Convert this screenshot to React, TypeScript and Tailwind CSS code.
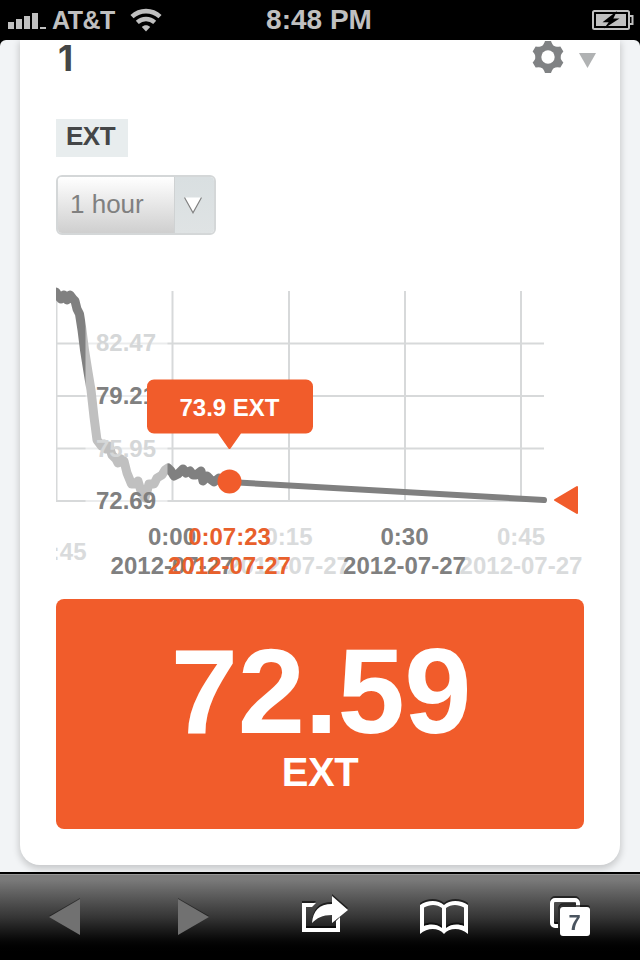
const H_LINES = [343.5, 396, 448.5, 501];
const V_LINES = [56.5, 172.5, 289, 405, 521];

const Y_LABELS = [
  { text: '82.47', y: 351, fill: '#d5d7d8' },
  { text: '79.21', y: 404, fill: '#808080' },
  { text: '75.95', y: 457, fill: '#d5d7d8' },
  { text: '72.69', y: 509, fill: '#808080' },
];

const DATE = '2012-07-27';
const X_LABELS = [
  { time: '0:15', x: 288.5, fill: '#d9dbdc' },
  { time: '0:45', x: 521, fill: '#d9dbdc' },
  { time: '0:00', x: 172, fill: '#808080' },
  { time: '0:30', x: 404.5, fill: '#808080' },
  { time: '0:07:23', x: 229.5, fill: '#e8602c' },
];

function StatusBar() {
  return (
    <header className="grid h-10 shrink-0 grid-cols-[1fr_auto_1fr] items-center bg-black text-[#c0c0c0]">
      <div className="flex items-center pl-2">
        <svg width="38" height="18" viewBox="0 0 38 18" fill="#c0c0c0">
          <rect x="0" y="11" width="6" height="7" />
          <rect x="8" y="8" width="6" height="10" />
          <rect x="16" y="5" width="6" height="13" />
          <rect x="24" y="2" width="6" height="16" />
          <rect x="32" y="16" width="6" height="2" />
        </svg>
        <span className="ml-[6px] text-[25px] leading-10 font-bold tracking-[-0.5px]">AT&amp;T</span>
        <svg className="ml-[15px]" width="32" height="24" viewBox="0 0 32 24" fill="none" stroke="#c0c0c0">
          <path d="M2 8.600C10 1.300 22 1.300 30 8.600" strokeWidth="4.6" />
          <path d="M7.300 14.300c5-4.500 12.400-4.500 17.400 0" strokeWidth="4.4" />
          <path d="M16 23.600l-4.200-4.600c2.300-2.300 6.100-2.300 8.400 0z" fill="#c0c0c0" stroke="none" />
        </svg>
      </div>
      <span className="mr-[2px] text-[28px] leading-[38px] font-bold">8:48 PM</span>
      <div className="flex justify-end pr-[6px]">
        <svg width="42" height="20" viewBox="0 0 42 20">
          <rect x="1" y="1" width="36" height="18" rx="1.5" fill="none" stroke="#c0c0c0" strokeWidth="2" />
          <path d="M38 6h2.500v8H38" fill="none" stroke="#c0c0c0" strokeWidth="2" />
          <rect x="4" y="4" width="30" height="12" fill="#c0c0c0" />
          <path d="M25 1L10.500 12.200h6.200L12 18.500 27.500 8.600h-6.200z" fill="#000" />
        </svg>
      </div>
    </header>
  );
}

function FeedHeader() {
  return (
    <div className="flex h-10 items-start justify-between">
      <h1 className="pl-[2px] font-['Inter','Liberation_Sans',sans-serif] text-[35px] leading-[37px] font-bold text-[#444647]">
        1
      </h1>
      <div className="flex items-start">
        <svg className="mt-px" width="32" height="32" viewBox="-16 -16 32 32" fill="#808284">
          <circle r="12.500" />
          {[0, 60, 120, 180, 240, 300].map((a) => (
            <path key={a} d="M-8.500-9Q-4.500-11-3-16H3Q4.500-11 8.500-9z" transform={`rotate(${a})`} />
          ))}
          <circle r="6.700" fill="#fff" />
        </svg>
        <svg className="mt-[13px] mr-[-12px] ml-[15px]" width="17" height="15" viewBox="0 0 17 15">
          <path d="M0 0h17L8.500 15z" fill="#b0b2b3" />
        </svg>
      </div>
    </div>
  );
}

function RangeSelect() {
  return (
    <button className="mt-[18px] flex h-[60px] w-40 overflow-hidden rounded-[6px] border-2 border-[#d4d7d8] text-left">
      <span className="h-full flex-1 bg-linear-to-b from-white to-[#cfcfcf] pl-3 text-[26px] leading-[55px] text-[#808080]">
        1 hour
      </span>
      <span className="flex h-full w-10 items-center border-l border-[#cfd2d3] bg-linear-to-b from-[#d9dfe1] to-[#dfe3e4] pl-[9px]">
        <svg className="shrink-0" width="18" height="17" viewBox="0 0 18 17">
          <path d="M.5.5h17L9 16z" fill="#fff" />
          <path d="M.5.5L9 15.800 17.500.5" fill="none" stroke="#808080" strokeWidth="1.200" />
        </svg>
      </span>
    </button>
  );
}

function Chart() {
  return (
    <svg
      className="mt-[45px] block overflow-hidden"
      width="528"
      height="310"
      viewBox="56 280 528 310"
      fontSize="24"
      fontWeight="bold"
    >
      <g stroke="#d7d9da" strokeWidth="2">
        {V_LINES.map((x) => (
          <line key={x} x1={x} x2={x} y1="291" y2="501" />
        ))}
        {H_LINES.map((y) => (
          <line key={y} x1="56" x2="544" y1={y} y2={y} />
        ))}
      </g>

      <g fill="none" stroke="#808080" strokeLinecap="round" strokeLinejoin="round">
        <path
          d="M56 292L59 297 61 299 64 295 67 300 70 295 73 299 75 301 77 309 79.500 314 82 330 84.500 350 88 372 91 390 94 417 97 440 101.500 446 104 444 106 449 109 446 112 455 116 459 118 463 121 459 124 461 127 473 131.500 484 135 484 138 481 141 491 145 498 149 484 154 484 157 478 162 475 165 470 168 468 171 471 174 476 178 474 180 472 183 469 186 473 190 471 193 475 196 475 201 471 203 481 207 476 210 479 214 482 219 478 224 481 230 482"
          strokeWidth="9"
        />
        <path d="M229 482L544 500" strokeWidth="6" />
      </g>

      {/* translucent band behind the value labels */}
      <rect x="85.500" y="285" width="82" height="222" fill="#fff" opacity=".5" />

      {Y_LABELS.map((l) => (
        <text key={l.text} x="96" y={l.y} fill={l.fill}>
          {l.text}
        </text>
      ))}

      {X_LABELS.map((l) => (
        <g key={l.time} fill={l.fill} textAnchor="middle">
          <text x={l.x} y="545">{l.time}</text>
          <text x={l.x} y="574">{DATE}</text>
        </g>
      ))}
      <text x="86.500" y="560" fill="#d9dbdc" textAnchor="end">23:45</text>

      <circle cx="229.500" cy="481.500" r="12" fill="#f15c2b" />
      <path
        d="M154 379.500H306a7 7 0 0 1 7 7V426.500a7 7 0 0 1-7 7H241L230.500 448.500q-1 1-2 0L218 433.500H154a7 7 0 0 1-7-7V386.500a7 7 0 0 1 7-7z"
        fill="#f15c2b"
      />
      <text x="229.500" y="416" fill="#fff" textAnchor="middle">73.9 EXT</text>
      <path d="M555 500L577 487v26z" fill="#f15c2b" stroke="#f15c2b" strokeWidth="2" strokeLinejoin="round" />
    </svg>
  );
}

function CurrentValue() {
  return (
    <div className="mt-[9px] flex h-[230px] flex-col items-center rounded-lg bg-[#f15c2b] pt-8 font-bold text-white">
      <span className="ml-[2px] text-[121px] leading-[120px] tracking-[-0.5px]">72.59</span>
      <span className="text-[40px] leading-[43px] tracking-[-0.5px]">EXT</span>
    </div>
  );
}

function Toolbar() {
  return (
    <nav className="h-[88px] shrink-0 border-t-2 border-black">
      <div className="flex h-full items-start border-t border-[#969696] bg-linear-to-b from-[#7b7b7b] from-5% via-[#353535] via-50% to-black to-95%">
        <svg className="mt-[24px] ml-[49px] drop-shadow-[0_-1px_0_rgba(0,0,0,0.4)]" width="31" height="36" viewBox="0 0 31 36">
          <path d="M0 18L31 0v36z" fill="#717171" />
        </svg>
        <svg className="mt-[24px] ml-[98px] drop-shadow-[0_-1px_0_rgba(0,0,0,0.4)]" width="31" height="36" viewBox="0 0 31 36">
          <path d="M31 18L0 0v36z" fill="#717171" />
        </svg>
        <svg className="mt-[21px] ml-[93px] drop-shadow-[0_-2px_0_rgba(0,0,0,0.6)]" width="47" height="38" viewBox="0 0 47 38">
          <path d="M14 7L10 11H4v21h30v-7l4-4v15H0V7z" fill="#fff" />
          <path d="M10 27C11 15 17 8 30 8V0l16 14-16 13v-8c-10 0-15 3-20 8z" fill="#fff" />
        </svg>
        <svg className="mt-[26px] ml-[71px] drop-shadow-[0_-2px_0_rgba(0,0,0,0.6)]" width="48" height="34" viewBox="0 0 48 34">
          <path
            fillRule="evenodd"
            fill="#fff"
            d="M0 4C7-1 18-1.500 24 4 30-1.500 41-1 48 4V33C40 26 29 27 24 33 19 27 8 26 0 33zM4 6.500V25C10 22.500 17 23 22 27V7C17 3 10 3 4 6.500zM44 6.500V25C38 22.500 31 23 26 27V7C31 3 38 3 44 6.500z"
          />
        </svg>
        <svg className="mt-[23px] ml-[82px] drop-shadow-[0_-2px_0_rgba(0,0,0,0.6)]" width="40" height="38" viewBox="0 0 40 38">
          <path d="M8 28H5a3 3 0 0 1-3-3V5a3 3 0 0 1 3-3h20a3 3 0 0 1 3 3v4" fill="none" stroke="#fff" strokeWidth="4" />
          <path d="M9 30V12a4 4 0 0 1 4-4h17" fill="none" stroke="#333" strokeWidth="1.500" />
          <rect x="10" y="9" width="30" height="29" rx="3" fill="#fff" />
          <text x="24.500" y="31.500" fontSize="22" fontWeight="bold" textAnchor="middle" fill="#4a545f">7</text>
        </svg>
      </div>
    </nav>
  );
}

export default function App() {
  return (
    <div className="flex h-[960px] w-[640px] flex-col overflow-hidden bg-black font-['Liberation_Sans',Arial,sans-serif]">
      <StatusBar />
      <main className="h-[832px] shrink-0 overflow-hidden rounded-t-[6px] bg-[#f2f4f6] px-5">
        <section className="h-[825px] rounded-b-[20px] bg-white px-9 shadow-[0_3px_7px_1px_rgba(0,0,0,0.18)]">
          <FeedHeader />
          <div className="mt-[39px] h-[38px] w-[72px] bg-[#e8edee] pl-[10px] text-[26px] leading-[35px] font-bold tracking-[-0.5px] text-[#444647]">
            EXT
          </div>
          <RangeSelect />
          <Chart />
          <CurrentValue />
        </section>
      </main>
      <Toolbar />
    </div>
  );
}
